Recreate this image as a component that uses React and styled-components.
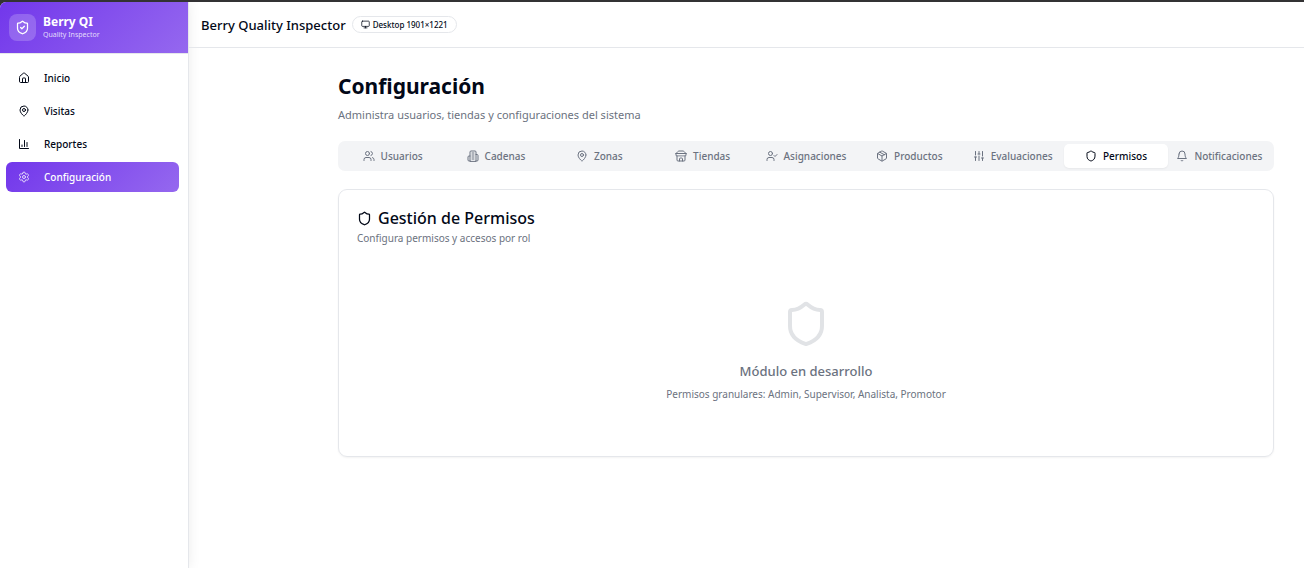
import React from "react";
import styled, { createGlobalStyle, css } from "styled-components";
import {
  House, MapPin, Settings, ShieldCheck, Monitor, Users,
  UserCheck, Package, SlidersVertical, Shield,
} from "lucide-react";

const ink = "#020817";
const muted = "#6b7280";
const line = "#e5e7eb";
const purple = "linear-gradient(135deg, #7237eb 0%, #9568ef 100%)";

const GlobalStyle = createGlobalStyle`
  *, *::before, *::after { box-sizing: border-box; }
  body {
    margin: 0;
    background: #333234;
    color: ${ink};
    font-family: "Noto Sans", "Open Sans", sans-serif;
    font-size: 10px;
  }
  h1, h2, h3, p { margin: 0; }
  button { font: inherit; border: 0; cursor: pointer; }
  svg { flex: none; display: block; }
`;

const Shell = styled.div`
  display: flex;
  min-height: calc(100vh - 2px);
  margin-top: 2px;
  background: #fff;
  border-top-left-radius: 6px;
  overflow: hidden;
`;

const Sidebar = styled.aside`
  flex: none;
  width: 189px;
  border-right: 1px solid ${line};
  box-shadow: 0 0 12px rgba(0, 0, 0, 0.08);
`;

const Brand = styled.div`
  display: flex;
  align-items: center;
  gap: 7px;
  height: 52px;
  padding: 0 9px;
  background: ${purple};
  border-bottom: 1px solid ${line};
  color: #fff;
`;

const BrandMark = styled.div`
  display: grid;
  place-items: center;
  width: 27px;
  height: 27px;
  border-radius: 8px;
  background: rgba(255, 255, 255, 0.2);
`;

const BrandName = styled.p`
  font-size: 12px;
  line-height: 14px;
  font-weight: 700;
`;

const BrandNote = styled.p`
  font-size: 7px;
  line-height: 11px;
  color: rgba(255, 255, 255, 0.8);
`;

const Nav = styled.nav`
  display: flex;
  flex-direction: column;
  gap: 3px;
  padding: 9px 9px 9px 6px;
`;

const NavLink = styled.a`
  display: flex;
  align-items: center;
  gap: 14px;
  height: 30px;
  padding: 0 12px;
  border-radius: 6px;
  color: ${ink};
  font-size: 10px;
  line-height: 16px;
  font-weight: 500;
  text-decoration: none;
  ${(p) => p.$active && css`
    background: ${purple};
    color: #fff;
    svg { opacity: 0.8; }
  `}
`;

const Body = styled.div`
  flex: 1;
  min-width: 0;
`;

const TopBar = styled.header`
  display: flex;
  align-items: center;
  gap: 6px;
  height: 46px;
  padding: 0 12px;
  border-bottom: 1px solid ${line};
`;

const AppTitle = styled.h2`
  font-size: 13px;
  line-height: 20px;
  font-weight: 500;
`;

const Badge = styled.span`
  display: inline-flex;
  align-items: center;
  gap: 3px;
  height: 17px;
  padding: 0 8px;
  border: 1px solid ${line};
  border-radius: 9px;
  font-size: 8px;
  font-weight: 500;
`;

const Content = styled.main`
  padding: 24px 30px 24px 149px;
`;

const PageTitle = styled.h1`
  font-size: 21px;
  line-height: 28px;
  font-weight: 700;
`;

const PageNote = styled.p`
  margin-top: 6px;
  font-size: 11px;
  line-height: 18px;
  color: ${muted};
`;

const TabList = styled.div`
  display: grid;
  grid-template-columns: repeat(9, minmax(0, 1fr));
  height: 30px;
  margin: 17px 0 18px;
  padding: 3px;
  border-radius: 7px;
  background: #f3f4f6;
`;

const Tab = styled.button`
  display: flex;
  align-items: center;
  justify-content: center;
  gap: 6px;
  padding: 0;
  border-radius: 5px;
  background: transparent;
  color: ${muted};
  font-size: 10px;
  line-height: 16px;
  font-weight: 500;
  white-space: nowrap;
  ${(p) => p.$active && css`
    background: #fff;
    color: ${ink};
    box-shadow: 0 1px 2px rgba(0, 0, 0, 0.05);
  `}
`;

const Card = styled.section`
  padding: 18px;
  border: 1px solid ${line};
  border-radius: 9px;
  box-shadow: 0 1px 2px rgba(0, 0, 0, 0.05);
`;

const CardTitle = styled.h2`
  display: flex;
  align-items: center;
  gap: 6px;
  font-size: 16px;
  line-height: 20px;
  font-weight: 500;
`;

const CardNote = styled.p`
  margin-top: 2px;
  font-size: 10px;
  line-height: 16px;
  color: ${muted};
`;

const Empty = styled.div`
  display: flex;
  flex-direction: column;
  align-items: center;
  padding: 54px 0 36px;
  color: ${muted};
  text-align: center;
  > svg { color: #e1e3e6; }
`;

const EmptyTitle = styled.h3`
  margin-top: 13px;
  font-size: 13px;
  line-height: 20px;
  font-weight: 500;
`;

const EmptyNote = styled.p`
  margin-top: 6px;
  font-size: 10px;
  line-height: 15px;
`;

const glyph = (...paths) => function Glyph({ size }) {
  return (
    <svg
      width={size}
      height={size}
      viewBox="0 0 24 24"
      fill="none"
      stroke="currentColor"
      strokeWidth="2"
      strokeLinecap="round"
      strokeLinejoin="round"
      aria-hidden="true"
    >
      {paths.map((d) => <path key={d} d={d} />)}
    </svg>
  );
};

const Bars = glyph("M3 3v18h18", "M18 17V9", "M13 17V5", "M8 17v-3");
const Tower = glyph(
  "M6 22V4a2 2 0 0 1 2-2h8a2 2 0 0 1 2 2v18Z",
  "M6 12H4a2 2 0 0 0-2 2v6a2 2 0 0 0 2 2h2",
  "M18 9h2a2 2 0 0 1 2 2v9a2 2 0 0 1-2 2h-2",
  "M10 6h4", "M10 10h4", "M10 14h4", "M10 18h4",
);
const Shop = glyph(
  "m2 7 4.41-4.41A2 2 0 0 1 7.83 2h8.34a2 2 0 0 1 1.42.59L22 7",
  "M4 12v8a2 2 0 0 0 2 2h12a2 2 0 0 0 2-2v-8",
  "M15 22v-4a2 2 0 0 0-2-2h-2a2 2 0 0 0-2 2v4",
  "M2 7h20",
  "M22 7v3a2 2 0 0 1-2 2a2.7 2.7 0 0 1-1.59-.63.7.7 0 0 0-.82 0A2.7 2.7 0 0 1 16 12a2.7 2.7 0 0 1-1.59-.63.7.7 0 0 0-.82 0A2.7 2.7 0 0 1 12 12a2.7 2.7 0 0 1-1.59-.63.7.7 0 0 0-.82 0A2.7 2.7 0 0 1 8 12a2.7 2.7 0 0 1-1.59-.63.7.7 0 0 0-.82 0A2.7 2.7 0 0 1 4 12a2 2 0 0 1-2-2V7",
);
const Alarm = glyph(
  "M6 8a6 6 0 0 1 12 0c0 7 3 9 3 9H3s3-2 3-9",
  "M10.3 21a1.94 1.94 0 0 0 3.4 0",
);

const navItems = [
  ["Inicio", House],
  ["Visitas", MapPin],
  ["Reportes", Bars],
  ["Configuración", Settings],
];

const tabs = [
  ["Usuarios", Users],
  ["Cadenas", Tower],
  ["Zonas", MapPin],
  ["Tiendas", Shop],
  ["Asignaciones", UserCheck],
  ["Productos", Package],
  ["Evaluaciones", SlidersVertical],
  ["Permisos", Shield],
  ["Notificaciones", Alarm],
];

export default function App() {
  return (
    <>
      <GlobalStyle />
      <Shell>
        <Sidebar>
          <Brand>
            <BrandMark><ShieldCheck size={15} /></BrandMark>
            <div>
              <BrandName>Berry QI</BrandName>
              <BrandNote>Quality Inspector</BrandNote>
            </div>
          </Brand>
          <Nav>
            {navItems.map(([label, Icon]) => (
              <NavLink key={label} href="#" $active={label === "Configuración"}>
                <Icon size={12} />
                {label}
              </NavLink>
            ))}
          </Nav>
        </Sidebar>
        <Body>
          <TopBar>
            <AppTitle>Berry Quality Inspector</AppTitle>
            <Badge><Monitor size={9} />Desktop 1901×1221</Badge>
          </TopBar>
          <Content>
            <PageTitle>Configuración</PageTitle>
            <PageNote>Administra usuarios, tiendas y configuraciones del sistema</PageNote>
            <TabList role="tablist">
              {tabs.map(([label, Icon]) => (
                <Tab
                  key={label}
                  type="button"
                  role="tab"
                  aria-selected={label === "Permisos"}
                  $active={label === "Permisos"}
                >
                  <Icon size={12} />
                  {label}
                </Tab>
              ))}
            </TabList>
            <Card>
              <CardTitle><Shield size={15} />Gestión de Permisos</CardTitle>
              <CardNote>Configura permisos y accesos por rol</CardNote>
              <Empty>
                <Shield size={48} />
                <EmptyTitle>Módulo en desarrollo</EmptyTitle>
                <EmptyNote>Permisos granulares: Admin, Supervisor, Analista, Promotor</EmptyNote>
              </Empty>
            </Card>
          </Content>
        </Body>
      </Shell>
    </>
  );
}
